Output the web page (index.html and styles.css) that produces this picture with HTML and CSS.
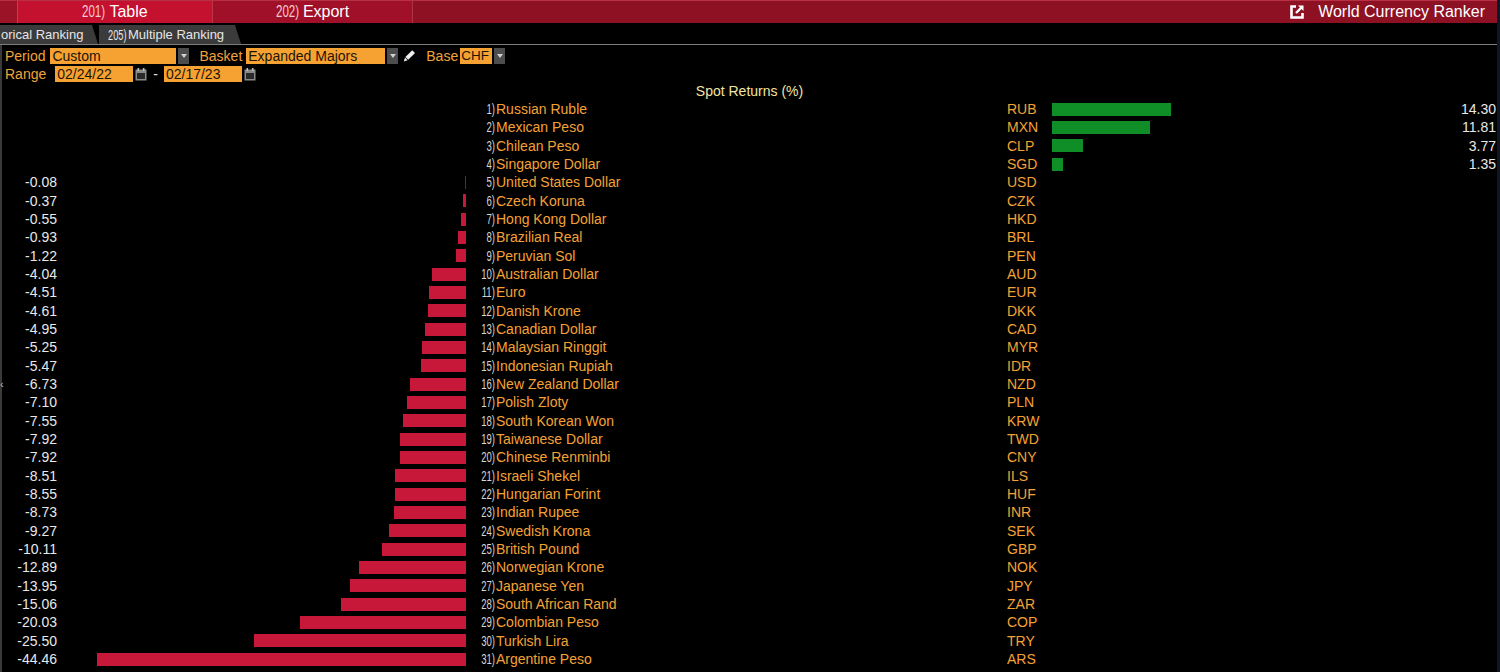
FILE: index.html
```html
<!DOCTYPE html>
<html>
<head>
<meta charset="utf-8">
<link rel="stylesheet" href="styles.css">
</head>
<body>
<div class="app">
  <div class="topbar">
    <div class="seg seg-a"></div>
    <div class="seg seg-b"><span class="tnum">201)</span><span>Table</span></div>
    <div class="seg seg-c"><span class="tnum">202)</span><span>Export</span></div>
    <div class="seg seg-d">
      <svg class="ext" width="16" height="16" viewBox="0 0 16 16"><path d="M7 2.5H2.5V13.5H13.5V9" fill="none" stroke="#fff" stroke-width="2.6"/><path d="M7 9L13.5 2.5" stroke="#fff" stroke-width="2.4"/><path d="M9 1.5H14.5V7Z" fill="#fff"/></svg>
      <span>World Currency Ranker</span>
    </div>
  </div>
  <div class="tabs">
    <div class="tab tab-1"><span>orical Ranking</span></div>
    <div class="tab tab-2"><span class="snum">205)</span><span>Multiple Ranking</span></div>
  </div>
  <div class="main">
    <span class="collapse">‹</span>
    <div class="controls">
      <div class="crow">
        <span class="lbl">Period</span>
        <span class="fld w-period">Custom</span><span class="dd"></span>
        <span class="lbl ml-basket">Basket</span>
        <span class="fld w-basket">Expanded Majors</span><span class="dd"></span>
        <svg class="pencil" width="13" height="14" viewBox="0 0 13 14"><path d="M9.2 1.2L12 4L5.2 10.8L2.4 8Z" fill="#eee"/><path d="M2 8.6L4.6 11.2L0.8 12.6Z" fill="#eee"/></svg>
        <span class="lbl ml-base">Base</span>
        <span class="fld w-base">CHF</span><span class="dd"></span>
      </div>
      <div class="crow">
        <span class="lbl">Range</span>
        <span class="fld w-date ml-range">02/24/22</span>
        <svg class="cal" width="12" height="13" viewBox="0 0 12 13"><rect x="0.5" y="1.5" width="11" height="11" fill="#8a8a8a"/><rect x="2.5" y="0" width="1.6" height="3" fill="#c0c0c0"/><rect x="7.9" y="0" width="1.6" height="3" fill="#c0c0c0"/><rect x="2" y="5" width="8" height="6" fill="#2a2a2a"/></svg>
        <span class="dash">-</span>
        <span class="fld w-date">02/17/23</span>
        <svg class="cal" width="12" height="13" viewBox="0 0 12 13"><rect x="0.5" y="1.5" width="11" height="11" fill="#8a8a8a"/><rect x="2.5" y="0" width="1.6" height="3" fill="#c0c0c0"/><rect x="7.9" y="0" width="1.6" height="3" fill="#c0c0c0"/><rect x="2" y="5" width="8" height="6" fill="#2a2a2a"/></svg>
      </div>
    </div>
    <div class="hdr">Spot Returns (%)</div>
    <div class="chart">
      <div class="row"><span class="val"></span><span class="negcell"></span><span class="rank"><b>1)</b></span><span class="name">Russian Ruble</span><span class="code">RUB</span><span class="poscell"><i class="bar pos" style="width:119px"></i></span><span class="pval">14.30</span></div>
      <div class="row"><span class="val"></span><span class="negcell"></span><span class="rank"><b>2)</b></span><span class="name">Mexican Peso</span><span class="code">MXN</span><span class="poscell"><i class="bar pos" style="width:98px"></i></span><span class="pval">11.81</span></div>
      <div class="row"><span class="val"></span><span class="negcell"></span><span class="rank"><b>3)</b></span><span class="name">Chilean Peso</span><span class="code">CLP</span><span class="poscell"><i class="bar pos" style="width:31px"></i></span><span class="pval">3.77</span></div>
      <div class="row"><span class="val"></span><span class="negcell"></span><span class="rank"><b>4)</b></span><span class="name">Singapore Dollar</span><span class="code">SGD</span><span class="poscell"><i class="bar pos" style="width:11px"></i></span><span class="pval">1.35</span></div>
      <div class="row"><span class="val">-0.08</span><span class="negcell"><i class="bar neg thin" style="width:1px"></i></span><span class="rank"><b>5)</b></span><span class="name">United States Dollar</span><span class="code">USD</span><span class="poscell"></span><span class="pval"></span></div>
      <div class="row"><span class="val">-0.37</span><span class="negcell"><i class="bar neg" style="width:3px"></i></span><span class="rank"><b>6)</b></span><span class="name">Czech Koruna</span><span class="code">CZK</span><span class="poscell"></span><span class="pval"></span></div>
      <div class="row"><span class="val">-0.55</span><span class="negcell"><i class="bar neg" style="width:5px"></i></span><span class="rank"><b>7)</b></span><span class="name">Hong Kong Dollar</span><span class="code">HKD</span><span class="poscell"></span><span class="pval"></span></div>
      <div class="row"><span class="val">-0.93</span><span class="negcell"><i class="bar neg" style="width:8px"></i></span><span class="rank"><b>8)</b></span><span class="name">Brazilian Real</span><span class="code">BRL</span><span class="poscell"></span><span class="pval"></span></div>
      <div class="row"><span class="val">-1.22</span><span class="negcell"><i class="bar neg" style="width:10px"></i></span><span class="rank"><b>9)</b></span><span class="name">Peruvian Sol</span><span class="code">PEN</span><span class="poscell"></span><span class="pval"></span></div>
      <div class="row"><span class="val">-4.04</span><span class="negcell"><i class="bar neg" style="width:34px"></i></span><span class="rank"><b>10)</b></span><span class="name">Australian Dollar</span><span class="code">AUD</span><span class="poscell"></span><span class="pval"></span></div>
      <div class="row"><span class="val">-4.51</span><span class="negcell"><i class="bar neg" style="width:37px"></i></span><span class="rank"><b>11)</b></span><span class="name">Euro</span><span class="code">EUR</span><span class="poscell"></span><span class="pval"></span></div>
      <div class="row"><span class="val">-4.61</span><span class="negcell"><i class="bar neg" style="width:38px"></i></span><span class="rank"><b>12)</b></span><span class="name">Danish Krone</span><span class="code">DKK</span><span class="poscell"></span><span class="pval"></span></div>
      <div class="row"><span class="val">-4.95</span><span class="negcell"><i class="bar neg" style="width:41px"></i></span><span class="rank"><b>13)</b></span><span class="name">Canadian Dollar</span><span class="code">CAD</span><span class="poscell"></span><span class="pval"></span></div>
      <div class="row"><span class="val">-5.25</span><span class="negcell"><i class="bar neg" style="width:44px"></i></span><span class="rank"><b>14)</b></span><span class="name">Malaysian Ringgit</span><span class="code">MYR</span><span class="poscell"></span><span class="pval"></span></div>
      <div class="row"><span class="val">-5.47</span><span class="negcell"><i class="bar neg" style="width:45px"></i></span><span class="rank"><b>15)</b></span><span class="name">Indonesian Rupiah</span><span class="code">IDR</span><span class="poscell"></span><span class="pval"></span></div>
      <div class="row"><span class="val">-6.73</span><span class="negcell"><i class="bar neg" style="width:56px"></i></span><span class="rank"><b>16)</b></span><span class="name">New Zealand Dollar</span><span class="code">NZD</span><span class="poscell"></span><span class="pval"></span></div>
      <div class="row"><span class="val">-7.10</span><span class="negcell"><i class="bar neg" style="width:59px"></i></span><span class="rank"><b>17)</b></span><span class="name">Polish Zloty</span><span class="code">PLN</span><span class="poscell"></span><span class="pval"></span></div>
      <div class="row"><span class="val">-7.55</span><span class="negcell"><i class="bar neg" style="width:63px"></i></span><span class="rank"><b>18)</b></span><span class="name">South Korean Won</span><span class="code">KRW</span><span class="poscell"></span><span class="pval"></span></div>
      <div class="row"><span class="val">-7.92</span><span class="negcell"><i class="bar neg" style="width:66px"></i></span><span class="rank"><b>19)</b></span><span class="name">Taiwanese Dollar</span><span class="code">TWD</span><span class="poscell"></span><span class="pval"></span></div>
      <div class="row"><span class="val">-7.92</span><span class="negcell"><i class="bar neg" style="width:66px"></i></span><span class="rank"><b>20)</b></span><span class="name">Chinese Renminbi</span><span class="code">CNY</span><span class="poscell"></span><span class="pval"></span></div>
      <div class="row"><span class="val">-8.51</span><span class="negcell"><i class="bar neg" style="width:71px"></i></span><span class="rank"><b>21)</b></span><span class="name">Israeli Shekel</span><span class="code">ILS</span><span class="poscell"></span><span class="pval"></span></div>
      <div class="row"><span class="val">-8.55</span><span class="negcell"><i class="bar neg" style="width:71px"></i></span><span class="rank"><b>22)</b></span><span class="name">Hungarian Forint</span><span class="code">HUF</span><span class="poscell"></span><span class="pval"></span></div>
      <div class="row"><span class="val">-8.73</span><span class="negcell"><i class="bar neg" style="width:72px"></i></span><span class="rank"><b>23)</b></span><span class="name">Indian Rupee</span><span class="code">INR</span><span class="poscell"></span><span class="pval"></span></div>
      <div class="row"><span class="val">-9.27</span><span class="negcell"><i class="bar neg" style="width:77px"></i></span><span class="rank"><b>24)</b></span><span class="name">Swedish Krona</span><span class="code">SEK</span><span class="poscell"></span><span class="pval"></span></div>
      <div class="row"><span class="val">-10.11</span><span class="negcell"><i class="bar neg" style="width:84px"></i></span><span class="rank"><b>25)</b></span><span class="name">British Pound</span><span class="code">GBP</span><span class="poscell"></span><span class="pval"></span></div>
      <div class="row"><span class="val">-12.89</span><span class="negcell"><i class="bar neg" style="width:107px"></i></span><span class="rank"><b>26)</b></span><span class="name">Norwegian Krone</span><span class="code">NOK</span><span class="poscell"></span><span class="pval"></span></div>
      <div class="row"><span class="val">-13.95</span><span class="negcell"><i class="bar neg" style="width:116px"></i></span><span class="rank"><b>27)</b></span><span class="name">Japanese Yen</span><span class="code">JPY</span><span class="poscell"></span><span class="pval"></span></div>
      <div class="row"><span class="val">-15.06</span><span class="negcell"><i class="bar neg" style="width:125px"></i></span><span class="rank"><b>28)</b></span><span class="name">South African Rand</span><span class="code">ZAR</span><span class="poscell"></span><span class="pval"></span></div>
      <div class="row"><span class="val">-20.03</span><span class="negcell"><i class="bar neg" style="width:166px"></i></span><span class="rank"><b>29)</b></span><span class="name">Colombian Peso</span><span class="code">COP</span><span class="poscell"></span><span class="pval"></span></div>
      <div class="row"><span class="val">-25.50</span><span class="negcell"><i class="bar neg" style="width:212px"></i></span><span class="rank"><b>30)</b></span><span class="name">Turkish Lira</span><span class="code">TRY</span><span class="poscell"></span><span class="pval"></span></div>
      <div class="row"><span class="val">-44.46</span><span class="negcell"><i class="bar neg" style="width:369px"></i></span><span class="rank"><b>31)</b></span><span class="name">Argentine Peso</span><span class="code">ARS</span><span class="poscell"></span><span class="pval"></span></div>
    </div>
  </div>
</div>
</body>
</html>
```

FILE: styles.css
```css
* { box-sizing: border-box; }
html, body { margin: 0; padding: 0; background: #000; }
body {
  width: 1500px;
  height: 672px;
  overflow: hidden;
  font-family: "Liberation Sans", Arial, sans-serif;
  font-size: 14px;
  color: #e8e8e8;
}
.app {
  position: relative;
  width: 1500px;
  height: 672px;
  border-right: 3px solid #0e1526;
}

/* top bar */
.topbar {
  display: flex;
  height: 23px;
  margin-bottom: 1px;
  border-top: 1px solid #b83046;
}
.seg {
  display: flex;
  align-items: center;
  justify-content: center;
  font-size: 16px;
  color: #fff;
  border-left: 1px solid rgba(255, 140, 150, 0.3);
}
.seg-a { width: 17px; background: #9a1327; border-left: 0; }
.seg-b { width: 195px; background: #c4112f; }
.seg-c { width: 200px; background: #a01129; }
.seg-d {
  flex: 1;
  background: #8d1123;
  justify-content: flex-end;
  padding-right: 12px;
  gap: 13px;
}
.tnum {
  display: inline-block;
  width: 27px;
  font-size: 17px;
  color: #f6c8d0;
  white-space: nowrap;
  transform: scaleX(0.68);
  transform-origin: left center;
}
.ext { display: block; }

/* tabs */
.tabs {
  display: flex;
  align-items: flex-end;
  height: 21px;
  border-bottom: 1px solid #7c7c7c;
}
.tab {
  display: flex;
  align-items: center;
  height: 19px;
  background: #3b3b3b;
  color: #e6e6e6;
  font-size: 13px;
  clip-path: polygon(0 0, calc(100% - 6px) 0, 100% 100%, 0 100%);
}
.tab-1 { width: 98px; padding-left: 1px; }
.tab-2 { width: 142px; margin-left: 1px; padding-left: 9px; }
.snum {
  display: inline-block;
  width: 20px;
  font-size: 14px;
  white-space: nowrap;
  transform: scaleX(0.66);
  transform-origin: left center;
}

/* main */
.main {
  position: relative;
  border-left: 2px solid #3a3a3a;
  height: 627px;
}
.collapse {
  position: absolute;
  left: -2px;
  top: 333px;
  font-size: 11px;
  color: #bbb;
}
.controls {
  display: flex;
  flex-direction: column;
  gap: 2px;
  padding: 3px 0 0 3px;
}
.crow {
  display: flex;
  align-items: center;
  height: 16px;
}
.lbl { color: #f2a33a; font-size: 14px; }
.fld {
  height: 16px;
  line-height: 16px;
  background: #f6a233;
  color: #1e1406;
  font-size: 14px;
  padding-left: 2px;
  white-space: nowrap;
  overflow: hidden;
}
.w-period { width: 126px; margin-left: 5px; }
.w-basket { width: 139px; margin-left: 4px; }
.w-base { width: 32px; margin-left: 2px; padding-left: 1px; font-size: 13.5px; }
.w-date { width: 78px; padding-left: 2px; }
.ml-basket { margin-left: 10px; }
.ml-base { margin-left: 10px; }
.ml-range { margin-left: 9px; }
.dd {
  width: 11px;
  height: 16px;
  margin-left: 2px;
  background: #4d4d4d;
  display: flex;
  align-items: center;
  justify-content: center;
}
.dd::after {
  content: "";
  border-left: 3px solid transparent;
  border-right: 3px solid transparent;
  border-top: 4px solid #d0d0d0;
}
.pencil { margin-left: 5px; display: block; }
.cal { margin-left: 2px; display: block; }
.dash { color: #e0e0e0; margin: 0 6px 0 6px; }

.hdr {
  height: 18px;
  line-height: 18px;
  text-align: center;
  color: #f2e4a0;
  font-size: 14px;
}

/* chart */
.chart { display: flex; flex-direction: column; }
.row {
  display: grid;
  grid-template-columns: 55px 409px 30px 511px 45px 1fr 60px;
  align-items: center;
  height: 18.33px;
  line-height: 18.33px;
  white-space: nowrap;
}
.val { text-align: right; color: #e8e8e8; }
.negcell { display: flex; justify-content: flex-end; height: 13px; }
.poscell { display: flex; height: 13px; }
.bar { display: block; height: 13px; }
.neg { background: #c8183a; }
.neg.thin { background: #7a1a2a; }
.pos { background: #0f8e27; }
.rank { text-align: right; padding-right: 1px; }
.rank b {
  display: inline-block;
  font-weight: normal;
  font-size: 14.5px;
  color: #d6d6d6;
  transform: scaleX(0.66);
  transform-origin: right center;
}
.name { color: #f4a236; }
.code { color: #f4a236; }
.pval { text-align: right; padding-right: 1px; color: #e8e8e8; }
```
